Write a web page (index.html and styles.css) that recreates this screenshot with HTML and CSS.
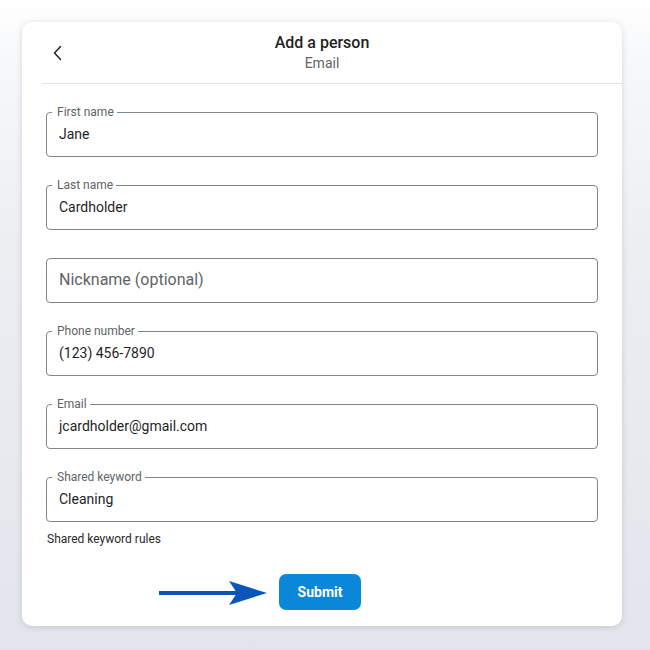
FILE: index.html
```html
<!DOCTYPE html>
<html>
<head>
<meta charset="utf-8">
<link rel="stylesheet" href="styles.css">
</head>
<body>
<div class="card">
  <header class="head">
    <button class="back" aria-label="Back">
      <svg width="16" height="16" viewBox="0 0 16 16"><path d="M10.5 1.5 L4.5 8 L10.5 14.5" fill="none" stroke="#202124" stroke-width="1.5" stroke-linecap="round" stroke-linejoin="round"/></svg>
    </button>
    <div class="titles">
      <div class="title">Add a person</div>
      <div class="sub">Email</div>
    </div>
  </header>
  <form class="form">
    <div class="field"><span class="label">First name</span><span class="val">Jane</span></div>
    <div class="field"><span class="label">Last name</span><span class="val">Cardholder</span></div>
    <div class="field"><span class="ph">Nickname (optional)</span></div>
    <div class="field"><span class="label">Phone number</span><span class="val">(123) 456-7890</span></div>
    <div class="field"><span class="label">Email</span><span class="val">jcardholder@gmail.com</span></div>
    <div class="field last"><span class="label">Shared keyword</span><span class="val">Cleaning</span></div>
    <div class="rules">Shared keyword rules</div>
    <div class="actions">
      <div class="btnwrap">
        <svg class="arrow" width="110" height="26" viewBox="0 0 110 26"><rect x="0" y="11" width="80" height="4" fill="#0a56b8"/><path d="M70 1 L108 13 L70 25 L78 13 Z" fill="#0a56b8"/></svg>
        <button type="button" class="submit">Submit</button>
      </div>
    </div>
  </form>
</div>
</body>
</html>
```
FILE: styles.css
```css
html, body { margin: 0; padding: 0; }
body {
  width: 650px;
  height: 650px;
  background: linear-gradient(#ffffff 0px, #f7f8fa 60px, #eceef2 250px, #e2e5ec 650px);
  font-family: Roboto, "Liberation Sans", sans-serif;
  padding: 22px;
  box-sizing: border-box;
  overflow: hidden;
}
.card {
  width: 600px;
  height: 604px;
  background: #fff;
  border-radius: 10px;
  box-shadow: 0 1px 6px rgba(60, 64, 80, 0.18);
  box-sizing: border-box;
}
.head {
  height: 61px;
  margin-left: 20px;
  border-bottom: 1px solid #e3e4e6;
  display: flex;
  align-items: center;
  position: relative;
}
.back {
  background: none;
  border: 0;
  padding: 0;
  width: 20px;
  height: 20px;
  margin-left: 6px;
  margin-top: 1px;
  display: flex;
  align-items: center;
  justify-content: center;
}
.titles {
  position: absolute;
  left: 0; right: 20px;
  top: 11px;
  text-align: center;
}
.title {
  font-size: 16px;
  font-weight: 500;
  color: #1f1f1f;
  line-height: 19px;
}
.sub {
  font-size: 14px;
  color: #5f6368;
  line-height: 18px;
  margin-top: 2px;
}
.form {
  padding: 28px 24px 0 24px;
  display: flex;
  flex-direction: column;
}
.field {
  position: relative;
  height: 45px;
  box-sizing: border-box;
  border: 1px solid #80868b;
  border-radius: 4px;
  display: flex;
  align-items: center;
  padding-left: 12px;
  padding-bottom: 1px;
  margin-bottom: 28px;
}
.field.last { margin-bottom: 0; }
.label {
  position: absolute;
  left: 5px;
  top: -7px;
  padding: 0 3px 0 5px;
  background: #fff;
  font-size: 12px;
  line-height: 13px;
  color: #5f6368;
}
.val {
  font-size: 14px;
  color: #1f1f1f;
  line-height: 18px;
}
.ph {
  font-size: 16px;
  color: #5f6368;
  line-height: 20px;
}
.rules {
  font-size: 12px;
  color: #2a2a2a;
  margin-top: 10px;
  padding-left: 1px;
  line-height: 14px;
}
.actions {
  display: flex;
  justify-content: center;
  margin-top: 28px;
  padding-right: 4px;
}
.btnwrap { position: relative; }
.arrow {
  position: absolute;
  right: calc(100% + 10px);
  top: 6px;
}
.submit {
  display: block;
  width: 82px;
  height: 36px;
  border: 0;
  border-radius: 7px;
  background: #0b87d9;
  color: #fff;
  font-family: Roboto, "Liberation Sans", sans-serif;
  font-weight: 700;
  font-size: 14px;
}
```
